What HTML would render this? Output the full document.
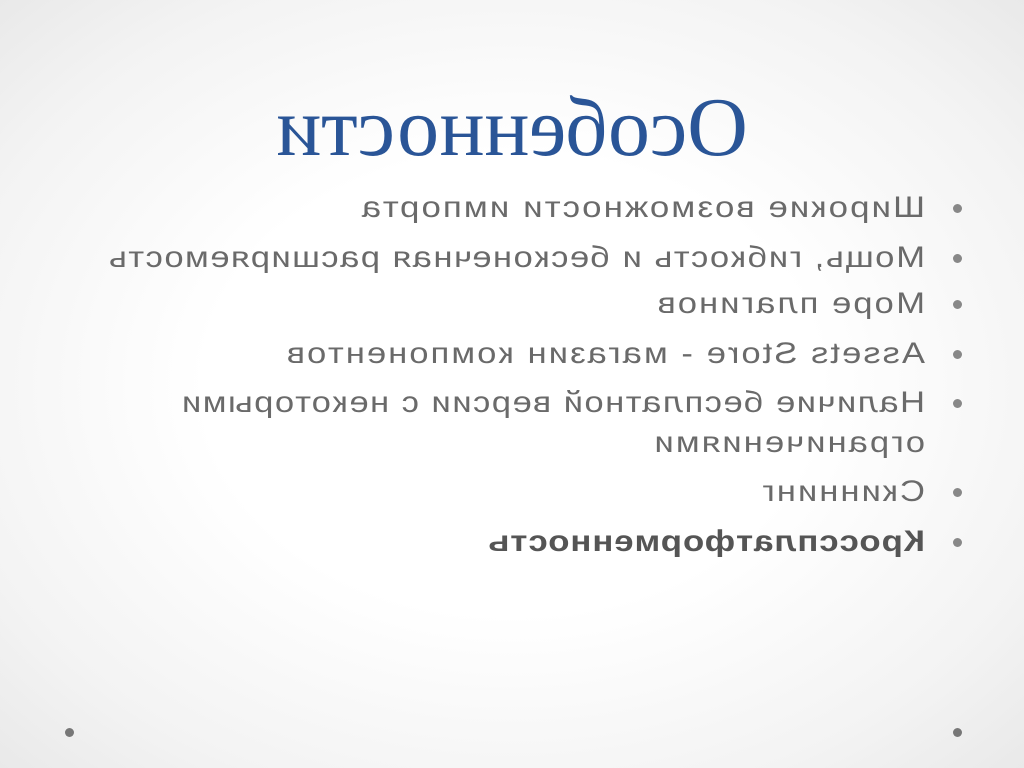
<!DOCTYPE html>
<html><head><meta charset="utf-8"><style>
html,body{margin:0;padding:0;}
body{width:1024px;height:768px;overflow:hidden;background:radial-gradient(ellipse 75% 75% at 50% 50%,#ffffff 40%,#f3f3f3 75%,#e6e6e6 100%);}
#p{position:absolute;left:0;top:0;width:1024px;height:768px;transform:scaleX(-1);}
.t{position:absolute;left:262px;top:86px;width:500px;text-align:center;font-family:"Liberation Serif",serif;font-size:84px;color:#2a5597;line-height:1;white-space:nowrap;}
.l{position:absolute;left:99px;font-family:"Liberation Sans",sans-serif;font-size:30px;color:#6a6a6a;letter-spacing:1.8px;line-height:1;white-space:nowrap;transform:scaleX(1.15);transform-origin:0 0;}
.d{position:absolute;left:62px;width:9px;height:9px;border-radius:50%;background:#888;}
.c{position:absolute;top:728px;width:9px;height:9px;border-radius:50%;background:#777;}
</style></head><body><div id="p">
<div class="t">Особенности</div>
<div class="d" style="top:204px"></div><div class="l" style="top:193px;transform:scaleX(1.16)">Широкие возможности импорта</div>
<div class="d" style="top:254px"></div><div class="l" style="top:243px;letter-spacing:1.3px">Мощь, гибкость и бесконечная расширяемость</div>
<div class="d" style="top:300px"></div><div class="l" style="top:289px">Море плагинов</div>
<div class="d" style="top:350px"></div><div class="l" style="top:339px">Assets Store - магазин компонентов</div>
<div class="d" style="top:399px"></div><div class="l" style="top:388px;letter-spacing:1.3px">Наличие бесплатной версии с некоторыми</div>
<div class="l" style="top:428px">ограничениями</div>
<div class="d" style="top:488px"></div><div class="l" style="top:477px">Скиннинг</div>
<div class="d" style="top:538px"></div><div class="l" style="top:527px;font-weight:bold;color:#555;letter-spacing:0.8px;transform:scaleX(1.16)">Кроссплатформенность</div>
<div class="c" style="left:62px"></div><div class="c" style="left:950px"></div>
</div></body></html>
